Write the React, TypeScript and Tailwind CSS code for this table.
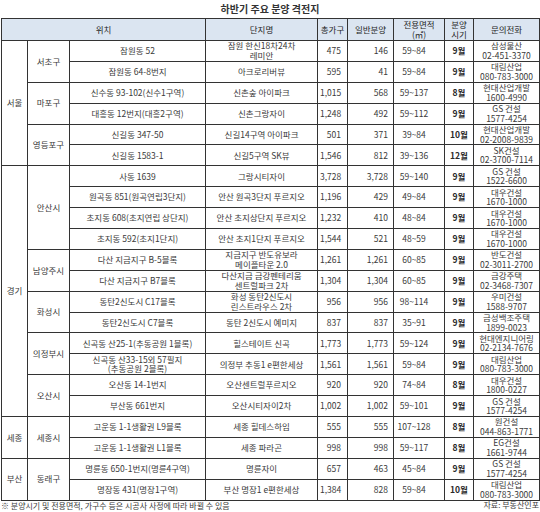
import React from 'react';

type Row = {
    sido?: [string, number];
    gu?: [string, number];
    addr: string[];
    name: string[];
    total: string;
    general: string;
    area: string;
    month: string;
    company: string;
    phone: string;
};

const rows: Row[] = [
    { sido: ['서울', 6], gu: ['서초구', 2], addr: ['잠원동 52'], name: ['잠원 한신18차24차', '레미안'], total: '475', general: '146', area: '59~84', month: '9월', company: '삼성물산', phone: '02-451-3370' },
    { addr: ['잠원동 64-8번지'], name: ['아크로리버뷰'], total: '595', general: '41', area: '59~84', month: '9월', company: '대림산업', phone: '080-783-3000' },
    { gu: ['마포구', 2], addr: ['신수동 93-102(신수1구역)'], name: ['신촌숲 아이파크'], total: '1,015', general: '568', area: '59~137', month: '8월', company: '현대산업개발', phone: '1600-4990' },
    { addr: ['대흥동 12번지(대흥2구역)'], name: ['신촌그랑자이'], total: '1,248', general: '492', area: '59~112', month: '9월', company: 'GS 건설', phone: '1577-4254' },
    { gu: ['영등포구', 2], addr: ['신길동 347-50'], name: ['신길14구역 아이파크'], total: '501', general: '371', area: '39~84', month: '10월', company: '현대산업개발', phone: '02-2008-9839' },
    { addr: ['신길동 1583-1'], name: ['신길5구역 SK뷰'], total: '1,546', general: '812', area: '39~136', month: '12월', company: 'SK건설', phone: '02-3700-7114' },
    { sido: ['경기', 12], gu: ['안산시', 4], addr: ['사동 1639'], name: ['그랑시티자이'], total: '3,728', general: '3,728', area: '59~140', month: '9월', company: 'GS 건설', phone: '1522-6600' },
    { addr: ['원곡동 851(원곡연립3단지)'], name: ['안산 원곡3단지 푸르지오'], total: '1,196', general: '429', area: '49~84', month: '9월', company: '대우건설', phone: '1670-1000' },
    { addr: ['초지동 608(초지연립 상단지)'], name: ['안산 초지상단지 푸르지오'], total: '1,232', general: '410', area: '48~84', month: '9월', company: '대우건설', phone: '1670-1000' },
    { addr: ['초지동 592(초지1단지)'], name: ['안산 초지1단지 푸르지오'], total: '1,544', general: '521', area: '48~59', month: '9월', company: '대우건설', phone: '1670-1000' },
    { gu: ['남양주시', 2], addr: ['다산 지금지구 B-5블록'], name: ['지금지구 반도유보라', '메이플타운 2.0'], total: '1,261', general: '1,261', area: '60~85', month: '9월', company: '반도건설', phone: '02-3011-2700' },
    { addr: ['다산 지금지구 B7블록'], name: ['다산지금 금강펜테리움', '센트럴파크 2차'], total: '1,304', general: '1,304', area: '60~85', month: '9월', company: '금강주택', phone: '02-3468-7307' },
    { gu: ['화성시', 2], addr: ['동탄2신도시 C17블록'], name: ['화성 동탄2신도시', '린스트라우스 2차'], total: '956', general: '956', area: '98~114', month: '9월', company: '우미건설', phone: '1588-9707' },
    { addr: ['동탄2신도시 C7블록'], name: ['동탄 2신도시 예미지'], total: '837', general: '837', area: '35~91', month: '9월', company: '금성백조주택', phone: '1899-0023' },
    { gu: ['의정부시', 2], addr: ['신곡동 산25-1(추동공원 1블록)'], name: ['힐스테이트 신곡'], total: '1,773', general: '1,773', area: '59~124', month: '9월', company: '현대엔지니어링', phone: '02-2134-7676' },
    { addr: ['신곡동 산33-15외 57필지', '(추동공원 2블록)'], name: ['의정부 추동1 e편한세상'], total: '1,561', general: '1,561', area: '59~84', month: '9월', company: '대림산업', phone: '080-783-3000' },
    { gu: ['오산시', 2], addr: ['오산동 14-1번지'], name: ['오산센트럴푸르지오'], total: '920', general: '920', area: '74~84', month: '8월', company: '대우건설', phone: '1800-0227' },
    { addr: ['부산동 661번지'], name: ['오산시티자이2차'], total: '1,002', general: '1,002', area: '59~101', month: '9월', company: 'GS 건설', phone: '1577-4254' },
    { sido: ['세종', 2], gu: ['세종시', 2], addr: ['고운동 1-1생활권 L9블록'], name: ['세종 힐데스하임'], total: '555', general: '555', area: '107~128', month: '8월', company: '원건설', phone: '044-863-1771' },
    { addr: ['고운동 1-1생활권 L1블록'], name: ['세종 파라곤'], total: '998', general: '998', area: '59~117', month: '8월', company: 'EG건설', phone: '1661-9744' },
    { sido: ['부산', 2], gu: ['동래구', 2], addr: ['명륜동 650-1번지(명륜4구역)'], name: ['명륜자이'], total: '657', general: '463', area: '45~84', month: '9월', company: 'GS 건설', phone: '1577-4254' },
    { addr: ['명장동 431(명장1구역)'], name: ['부산 명장1 e편한세상'], total: '1,384', general: '828', area: '59~84', month: '10월', company: '대림산업', phone: '080-783-3000' },
];

const cell = 'border border-[#333] px-[2px] py-0';

const Lines: React.FC<{ items: string[] }> = ({ items }) => (
    <>
        {items.map((t, i) => (
            <div key={i} className="whitespace-nowrap">{t}</div>
        ))}
    </>
);

const App: React.FC = () => {
    return (
        <div
            className="w-[540px] h-[512px] bg-white overflow-hidden text-[#3a3a3a]"
            style={{ fontFamily: '"Noto Sans CJK KR", "Noto Sans", sans-serif' }}
        >
            <div className="h-[18px] flex items-center justify-center text-[10px] font-bold text-[#333] pb-[2px]">
                하반기 주요 분양 격전지
            </div>
            <table className="border-collapse w-[538px] ml-[1px] table-fixed text-[8.5px] leading-[9.5px]">
                <colgroup>
                    <col className="w-[26px]" />
                    <col className="w-[42px]" />
                    <col className="w-[136px]" />
                    <col className="w-[112px]" />
                    <col className="w-[30px]" />
                    <col className="w-[46px]" />
                    <col className="w-[51px]" />
                    <col className="w-[29px]" />
                    <col className="w-[66px]" />
                </colgroup>
                <thead>
                    <tr className="h-[22px] bg-[#dbe5f1] text-[#1f1f1f]">
                        <th colSpan={3} className={`${cell} font-normal`}>위치</th>
                        <th className={`${cell} font-normal`}>단지명</th>
                        <th className={`${cell} font-normal`}>총가구</th>
                        <th className={`${cell} font-normal`}>일반분양</th>
                        <th className={`${cell} font-normal`}>
                            <div>전용면적</div>
                            <div>(㎡)</div>
                        </th>
                        <th className={`${cell} font-normal`}>
                            <div>분양</div>
                            <div>시기</div>
                        </th>
                        <th className={`${cell} font-normal`}>문의전화</th>
                    </tr>
                </thead>
                <tbody>
                    {rows.map((r, i) => (
                        <tr key={i} className="h-[20.9px]">
                            {r.sido && (
                                <td rowSpan={r.sido[1]} className={`${cell} text-center`}>{r.sido[0]}</td>
                            )}
                            {r.gu && (
                                <td rowSpan={r.gu[1]} className={`${cell} text-center`}>{r.gu[0]}</td>
                            )}
                            <td className={`${cell} text-center`}><Lines items={r.addr} /></td>
                            <td className={`${cell} text-center`}><Lines items={r.name} /></td>
                            <td className={`${cell} text-right pr-[6px]`}>{r.total}</td>
                            <td className={`${cell} text-right pr-[5px]`}>{r.general}</td>
                            <td className={`${cell} text-center pr-[12px]`}>{r.area}</td>
                            <td className={`${cell} text-center font-bold text-[#2a2a2a]`}>{r.month}</td>
                            <td className={`${cell} text-center`}>
                                <div>{r.company}</div>
                                <div>{r.phone}</div>
                            </td>
                        </tr>
                    ))}
                </tbody>
            </table>
            <div className="flex justify-between items-start text-[8px] leading-[10px] px-[1px]">
                <span>※ 분양시기 및 전용면적, 가구수 등은 시공사 사정에 따라 바뀔 수 있음</span>
                <span className="-mt-[1px]">자료: 부동산인포</span>
            </div>
        </div>
    );
};

export default App;
